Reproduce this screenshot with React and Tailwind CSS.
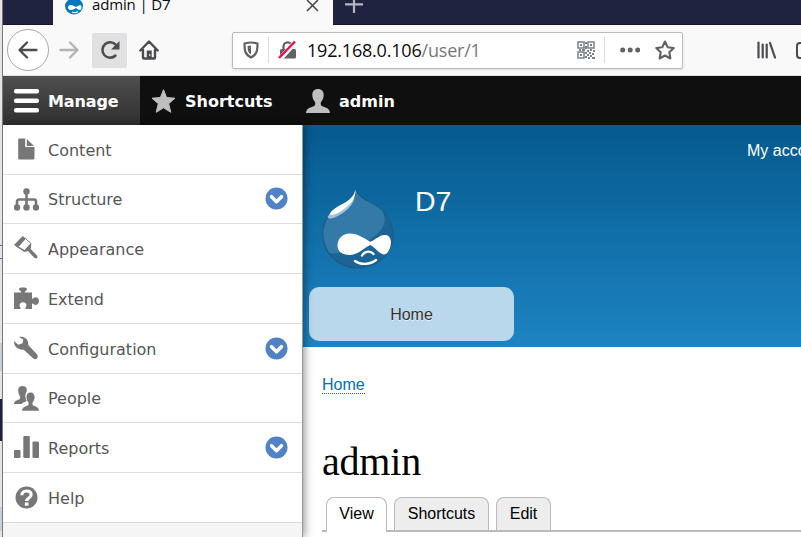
import React from "react";

const Icon = ({ w, h, box, className = "", children }) => (
  <svg width={w} height={h} viewBox={box || `0 0 ${w} ${h}`} className={`block shrink-0 ${className}`} fill="none">
    {children}
  </svg>
);

const Person = ({ fill }) => (
  <path fill={fill} d="M12 0c3.600 0 5.700 2.300 5.700 6 0 3.200-1.300 5.300-2.500 6.800-.9 1.300-.6 3.700.7 4.300 2.700 1.300 7.700 1.700 8.100 6.900H0c.4-5.200 5.400-5.600 8.100-6.900 1.300-.6 1.600-3 .7-4.300C7.600 11.300 6.300 9.200 6.300 6c0-3.700 2.100-6 5.700-6z" />
);

const G = "#777777";

const menu = [
  {
    label: "Content", h: "h-[50px]",
    icon: <path fill={G} d="M5 1.500h6.200V10H20.500v11.500a1 1 0 0 1-1 1H5.200a1 1 0 0 1-1-1V2.500a1 1 0 0 1 .8-1zM12.800 2l7.200 7h-7.200z" />,
  },
  {
    label: "Structure", h: "h-[49px]", more: true,
    icon: (
      <g>
        <path stroke={G} strokeWidth="2.600" d="M12.500 5v15M3 19v-4.500a2 2 0 0 1 2-2h15a2 2 0 0 1 2 2V19" />
        <circle cx="12.500" cy="4.500" r="3.200" fill={G} />
        <circle cx="3" cy="20.500" r="3.200" fill={G} />
        <circle cx="12.500" cy="20.500" r="3.200" fill={G} />
        <circle cx="22" cy="20.500" r="3.200" fill={G} />
      </g>
    ),
  },
  {
    label: "Appearance", h: "h-[50px]",
    icon: (
      <g>
        <path fill={G} d="M0 9 8.700 0l3 2.500-8 9z" />
        <path stroke={G} strokeWidth="1" d="M11.500 2.500l5.500 5-6.500 7L3.700 11z" />
        <path fill={G} d="m2.500 10.500 1.200-.5 6.800 4.300 6-6.500.8.800-.6 4.500L23 19.500c.7.800.6 2.300-.2 2.800-.8.500-1.700.3-2.300-.2L14 15l-3.700 1z" />
      </g>
    ),
  },
  {
    label: "Extend", h: "h-[50px]",
    icon: (
      <path fill={G} d="M0 6.500h7.300c.2-1.800-2.300-2-2.300-3.500C5 1.700 7 1.500 9 1.500s4 .2 4 1.500c0 1.500-2.500 1.700-2.300 3.500H18v6.300c1.200.3 1.800-1.500 3.700-1.500 1.800 0 3.300 1.400 3.300 3.700s-1.500 4-3.300 4c-1.900 0-2.500-1.900-3.700-1.500V23h-6.500c-.6-1.500 1-2 1-3.700 0-1.800-1.500-3.100-3.500-3.100s-3.500 1.300-3.500 3.100C5.500 21 7 21.500 6.500 23H0z" />
    ),
  },
  {
    label: "Configuration", h: "h-[50px]", more: true,
    icon: (
      <path fill={G} d="M5 1c4-1.300 8.700 1.200 9.200 5.700.1 1.200-.2 2 .5 2.700l8.300 8.900c.9 1 1 2.700.3 3.700-.9 1.400-2.700 1.700-4 .6l-9-8.400c-.7-.7-1.600-.4-2.700-.5C3 13.300-.3 9.800 0 5.200l4.300 3.500 4.200-1.400.8-3.800z" />
    ),
  },
  {
    label: "People", h: "h-[49px]",
    icon: (
      <g>
        <path fill={G} d="M8.500 0c2.700 0 4.300 1.600 4.300 4 0 .8-.1 1.500-.4 2.200-1 1.300-1.300 3.300-.9 5.300.2 1.400.7 2.600 1.300 3.600-2.100.9-3.900 1.500-5.100 3H0c.2-3.200 3-3.700 5-4.500 1.600-.7 1.600-2.500.7-3.700C4.800 8.600 4.200 6.500 4.200 4c0-2.400 1.600-4 4.300-4z" />
        <g transform="translate(8 6.500) scale(.71 .76)"><Person fill={G} /></g>
      </g>
    ),
  },
  {
    label: "Reports", h: "h-[50px]", more: true,
    icon: (
      <g fill={G}>
        <rect x="0" y="15" width="6.500" height="8" rx="1" />
        <rect x="9.300" y="1" width="6.500" height="22" rx="1" />
        <rect x="18.500" y="6.500" width="6.500" height="16.500" rx="1" />
      </g>
    ),
  },
  {
    label: "Help", h: "h-[50px]",
    icon: (
      <g>
        <circle cx="12.500" cy="12.500" r="11" fill={G} />
        <path stroke="#fff" strokeWidth="3.200" d="M7.800 10.200c0-2.600 2-4.200 4.600-4.200 2.700 0 4.700 1.300 4.700 3.700 0 3.300-4.500 3.200-4.500 6.300" />
        <rect x="10.800" y="17.500" width="3.700" height="3.200" fill="#fff" />
      </g>
    ),
  },
];

const Drop = () => (
  <svg width="72" height="81" viewBox="0 0 72 81" className="-mt-px block shrink-0" fill="none">
    <path fill="#1c6496" stroke="#225a82" strokeWidth="1.200" d="M33.500 1c1.500 5 5 8 11 11.500C57 19 71 28 71 46c0 20-16 34-35.500 34S.8 65 .8 46C.8 36 6 27 15 21c8-5 17-7 18.500-20z" />
    <path fill="#337aa9" d="M33.500 1.500c1.500 5 5 8 11 11.500 6 3 12 6 16 10 5 10 2 20-15 30-12 11-23 13-38 12C3.500 59 1.400 52 1.400 46 1.400 36 6 27 15 21.500c8-5 17-7 18.500-20z" />
    <path fill="#a3c2d8" d="M5.500 29c2 3 7 1 12-2 7-4 13-9 15-17-8 5-22 10-27 19z" />
    <path fill="#fff" d="M33.300 1.500c.5 4-.3 8-3.300 12-5 6-14 13-20 13.500-2 0-2.500-.8-1.500-2.500C15 16 31 15 33.300 1.500z" />
    <path fill="#fff" d="M28 45.500c8 0 14 5 20.500 8.200 5-2.200 10-7.700 15-6.700 4.500.5 6 5 5.300 9.500-1 6-3.800 10-6.800 10-4 0-9-7-13.500-9.500C41.500 60 36 67 27.500 67 20 67 15.500 63 15.500 57.500c0-6.500 5-12 12.500-12z" />
    <path stroke="#fff" strokeWidth="2.300" strokeLinecap="round" d="M33 73c5 4 15 4 21-1M40 67.500c3-5 9-5 11.500-1.500" />
  </svg>
);

const UI = "font-['Open_Sans','Noto_Sans',sans-serif]";
const SANS = "font-['Liberation_Sans',Arial,sans-serif]";

function Browser() {
  return (
    <header className={`shrink-0 ${UI}`}>
      <div className="flex h-[25px] bg-[#202340]">
        <div className="w-[50px] border-b border-[#15152b]" />
        <div className="flex w-[280px] items-start bg-[#f9f9fa] pl-3">
          <div className="-mt-[5px] h-[20px] w-[18px]">
            <svg width="18" height="20" viewBox="0 0 18 20" fill="none">
              <path fill="#0678be" d="M8 0c2 3 10 4 10 11a9 8.500 0 0 1-18 0C0 5 7 4 8 0z" />
              <path fill="#fff" d="M6 10c2 0 3 1 5 2 2-1 3-2 4-2 2 0 2 5 0 5-1 0-3-1-4-2-2 1-3 2-5 2-4 0-4-5 0-5z" />
              <path stroke="#fff" strokeWidth="1.200" d="M7 17c2 1 4 1 6-.5" />
            </svg>
          </div>
          <div className="-mt-[8px] ml-[9px] w-[211px] whitespace-nowrap text-[15px] leading-[25px] tracking-[-0.150px] text-[#0c0c0d]">admin | D7</div>
          <Icon w={13} h={13} className="ml-[3px] -mt-px"><path stroke="#4a4a4f" strokeWidth="1.600" d="m1 1 11 11M12 1 1 12" /></Icon>
        </div>
        <div className="flex-1 border-b border-[#15152b] pl-3">
          <Icon w={18} h={14}><path stroke="#b5b6c3" strokeWidth="2.200" d="M0 4.300h18M9 0v13" /></Icon>
        </div>
      </div>
      <div className="flex h-[51px] items-center overflow-hidden border-b border-[#dfe0e1] bg-[#f9f9fa] pl-1">
        <div className="flex size-[42px] shrink-0 items-center justify-center rounded-full border border-[#aaa] bg-white">
          <Icon w={20} h={18}><path stroke="#4a4a4f" strokeWidth="2.300" strokeLinecap="round" strokeLinejoin="round" d="M18.500 9H2M9 1.500 1.500 9 9 16.500" /></Icon>
        </div>
        <Icon w={20} h={18} className="ml-[10px]"><path stroke="#b4b4b6" strokeWidth="2.300" strokeLinecap="round" strokeLinejoin="round" d="M1.500 9H18M11 1.500 18.500 9 11 16.500" /></Icon>
        <div className="ml-[13px] flex size-[35px] shrink-0 items-center justify-center rounded-[2px] bg-[#e1e1e2]">
          <Icon w={20} h={20}>
            <path stroke="#4a4a4f" strokeWidth="2.500" strokeLinecap="round" d="M15.500 15.500A7.700 7.700 0 1 1 16 5l1 1.500" />
            <path fill="#4a4a4f" d="M19.500 1v8.500H11z" />
          </Icon>
        </div>
        <Icon w={20} h={20} className="ml-[12px]">
          <path stroke="#4a4a4f" strokeWidth="2.400" strokeLinecap="round" strokeLinejoin="round" d="M1.300 10.500 10 1.500l8.700 9M4 10v7.500q0 1 1 1h10q1 0 1-1V10" />
          <path fill="#4a4a4f" d="M7.700 10.500h5V19h-5z" /><path fill="#fff" d="M10.300 14h1v2h-1z" />
        </Icon>
        <div className="ml-[73px] flex h-[37px] w-[451px] shrink-0 items-center rounded-[2px] border border-[#bcbcbd] bg-white shadow-sm">
          <Icon w={16} h={18} className="ml-[10px]">
            <path stroke="#626266" strokeWidth="2.200" strokeLinejoin="round" d="M8 1.500c2.500 0 4.500.5 6.500 1 0 7-.5 11-6.500 14C2 13.500 1.500 9.500 1.500 2.500c2-.5 4-1 6.500-1z" />
            <path fill="#626266" d="M8 4.500v9C4.800 11.500 4.600 9 4.600 5z" />
          </Icon>
          <div className="ml-[9px] h-[26px] w-px bg-[#dedede]" />
          <Icon w={19} h={20} className="ml-[9px]">
            <path stroke="#626266" strokeWidth="2.300" d="M5.500 10V6.500a4.200 4.200 0 0 1 8.400 0V10" />
            <rect x="2" y="9" width="16" height="9.500" rx="1.500" fill="#626266" />
            <path stroke="#fff" strokeWidth="5" d="M2 19 17.500 2" /><path stroke="#ff0039" strokeWidth="2.300" d="M1 18 17 1.500" />
          </Icon>
          <div className="ml-[10px] w-[270px] whitespace-nowrap text-[18px] leading-[24px] tracking-[-0.200px] text-[#0c0c0d]">192.168.0.106<span className="text-[#77777a]">/user/1</span></div>
          <Icon w={18} h={18}>
            <g stroke="#7a828c" strokeWidth="1.500"><rect x="1" y="1" width="6" height="6" /><rect x="11" y="1" width="6" height="6" /><rect x="1" y="11" width="6" height="6" /></g>
            <g fill="#7a828c"><path d="M3 3h2v2H3zM13 3h2v2h-2zM3 13h2v2H3zM8 1h2v2H8zM8 5h2v3H8zM2 8h2v2H2zM5 8h3v2H5zM10 9h2v2h-2zM13 8h2v2h-2zM16 9h2v2h-2zM8 11h2v2H8zM12 11h2v2h-2zM15 12h2v2h-2zM10 13h2v2h-2zM13 14h2v2h-2zM8 15h2v2H8zM11 16h2v2h-2zM15 16h3v2h-3z" /></g>
          </Icon>
          <div className="ml-[9px] h-[26px] w-px bg-[#dedede]" />
          <Icon w={20} h={6} className="ml-[15px]"><g fill="#626266"><circle cx="2.700" cy="3" r="2.500" /><circle cx="10.200" cy="3" r="2.500" /><circle cx="17.700" cy="3" r="2.500" /></g></Icon>
          <Icon w={20} h={20} className="ml-[15px]"><path stroke="#626266" strokeWidth="2.100" strokeLinejoin="round" d="m10 1.500 2.700 5.700 6 .8-4.400 4.300 1.100 6.200L10 15.500l-5.400 3 1.100-6.200L1.300 8l6-.8z" /></Icon>
        </div>
        <Icon w={20} h={18} className="ml-[74px]"><path stroke="#4a4a4f" strokeWidth="2.200" strokeLinecap="round" d="M1.500 1.500v15M5.700 3.500v13M9.700 3.500v13M13 2l5 14.500" /></Icon>
        <div className="ml-[19px] h-[17px] w-5 shrink-0 rounded-[4px] border-2 border-[#4a4a4f]" />
      </div>
    </header>
  );
}

function Toolbar() {
  return (
    <nav className="flex h-[49px] shrink-0 bg-[#0f0f0f] font-['DejaVu_Sans',sans-serif] text-[16px] font-bold text-white">
      <div className="flex w-[137px] items-center bg-linear-to-b from-[#4f4f4f] to-[#303030] pl-[11px]">
        <Icon w={25} h={24}><g fill="#fff"><rect width="25" height="4.600" y="0" rx="2" /><rect width="25" height="4.600" y="9.500" rx="2" /><rect width="25" height="4.600" y="19" rx="2" /></g></Icon>
        <span className="ml-[9px] pt-[2px] tracking-[-0.100px]">Manage</span>
      </div>
      <div className="flex w-[153px] items-center pl-[11px]">
        <Icon w={25} h={24}><path fill="#bebebe" stroke="#bebebe" strokeLinejoin="round" d="m12.500 .7 3.100 7.800 8.400.7-6.300 5.500 2.100 8.600-7.300-4.500-7.300 4.500 2.100-8.600L1 9.200l8.400-.7z" /></Icon>
        <span className="ml-[9px] pt-[2px]">Shortcuts</span>
      </div>
      <div className="flex items-center pl-[13px]">
        <Icon w={24} h={24}><Person fill="#bebebe" /></Icon>
        <span className="ml-[9px] pt-[2px]">admin</span>
      </div>
    </nav>
  );
}

function Menu() {
  return (
    <aside className="relative z-10 w-[300px] shrink-0 border-r border-[#999] bg-[#f5f5f5] font-['DejaVu_Sans',sans-serif] shadow-[2px_0_8px_rgba(0,0,0,0.4)]">
      {menu.map((m) => (
        <div key={m.label} className={`flex ${m.h} items-center border-b border-[#ddd] bg-white pl-[11px] pr-[14px]`}>
          <Icon w={25} h={25}>{m.icon}</Icon>
          <span className="ml-[9px] flex-1 pt-[2px] text-[16px] leading-[24px] text-[#565656]">{m.label}</span>
          {m.more && (
            <Icon w={23} h={23} className="-mt-px">
              <circle cx="11.500" cy="11.500" r="11" fill="#5181c6" />
              <path stroke="#fff" strokeWidth="3.500" strokeLinecap="round" strokeLinejoin="round" d="m6.500 9.700 5 5 5-5" />
            </Icon>
          )}
        </div>
      ))}
    </aside>
  );
}

function Site() {
  return (
    <main className={`min-w-0 flex-1 overflow-hidden bg-white ${SANS}`}>
      <div className="h-[222px] bg-linear-to-b from-[#055a8e] to-[#1d84c3] text-white">
        <div className="flex h-[64px] justify-end overflow-hidden pt-[16px]">
          <span className="w-[54px] whitespace-nowrap text-[16px] leading-[20px]">My account</span>
        </div>
        <div className="flex h-[98px] pl-[19px]">
          <Drop />
          <span className="-mt-[5px] ml-[21px] text-[28.500px] leading-[34px]">D7</span>
        </div>
        <div className="ml-[6px] flex h-[54px] w-[205px] items-center justify-center rounded-[10px] bg-[#bad8eb] text-[16px] text-[#333] [text-shadow:0_1px_#eee]">
          <span className="pt-px">Home</span>
        </div>
      </div>
      <div className="flex flex-col items-start pl-[19px] pt-[29px]">
        <a className="border-b border-dotted border-[#0071b3] text-[16px] leading-[17px] text-[#0071b3]">Home</a>
        <h1 className="mt-[43px] font-['Liberation_Serif',serif] text-[40px] leading-[50px] tracking-[-0.200px] text-black">admin</h1>
        <div className="mt-[10px] flex h-[35px] w-full items-end gap-[7px] border-b-2 border-[#bbb] pl-[4px] text-[16px] leading-[32px] text-black">
          <div className="-mb-[2px] h-[35px] w-[61px] rounded-t-[8px] border border-b-0 border-[#bbb] bg-white text-center">View</div>
          <div className="h-[33px] w-[95px] rounded-t-[8px] border border-b-0 border-[#bbb] bg-[#ededed] text-center">Shortcuts</div>
          <div className="h-[33px] w-[55px] rounded-t-[8px] border border-b-0 border-[#bbb] bg-[#ededed] text-center">Edit</div>
        </div>
      </div>
    </main>
  );
}

export default function App() {
  return (
    <div className="flex h-[537px] w-[801px] overflow-hidden bg-white">
      <div className="flex w-[3px] shrink-0 flex-col border-r border-[#777] bg-[#e4e4e4]">
        <div className="h-[245px]" />
        <div className="h-px bg-[#3d73b9]" />
        <div className="h-[12px]" />
        <div className="h-px bg-[#3d73b9]" />
        <div className="h-[84px]" />
        <div className="h-[28px] bg-[#c7d0dc]" />
        <div className="h-[28px]" />
        <div className="h-[42px] bg-[#18253c]" />
        <div className="h-[66px]" />
        <div className="h-[24px] bg-[#c7d0dc]" />
      </div>
      <div className="flex min-w-0 flex-1 flex-col overflow-hidden">
        <Browser />
        <Toolbar />
        <div className="flex min-h-0 flex-1">
          <Menu />
          <Site />
        </div>
      </div>
    </div>
  );
}
